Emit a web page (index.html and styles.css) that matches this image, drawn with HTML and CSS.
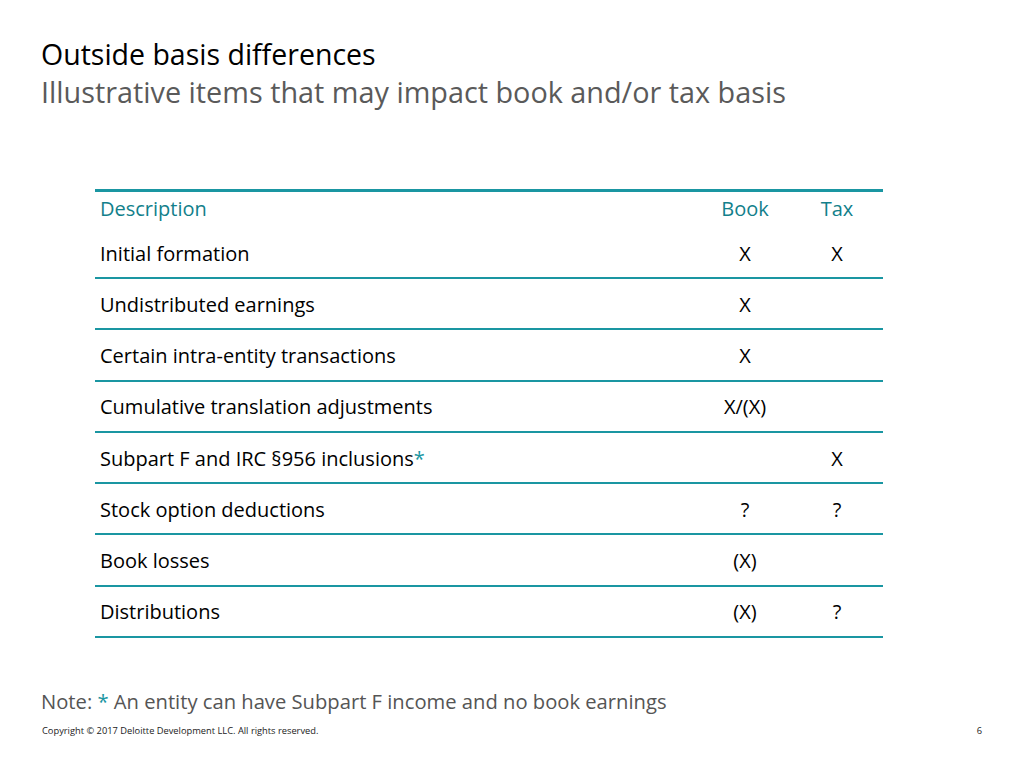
FILE: index.html
```html
<!DOCTYPE html>
<html>
<head>
<meta charset="utf-8">
<link rel="stylesheet" href="styles.css">
</head>
<body>
<div class="slide">
  <header class="head">
    <h1 class="title">Outside basis differences</h1>
    <h2 class="subtitle">Illustrative items that may impact book and/or tax basis</h2>
  </header>
  <table class="grid">
    <thead>
      <tr><th class="desc">Description</th><th class="col">Book</th><th class="col">Tax</th></tr>
    </thead>
    <tbody>
      <tr><td class="desc">Initial formation</td><td class="col">X</td><td class="col">X</td></tr>
      <tr><td class="desc">Undistributed earnings</td><td class="col">X</td><td class="col"></td></tr>
      <tr><td class="desc">Certain intra-entity transactions</td><td class="col">X</td><td class="col"></td></tr>
      <tr><td class="desc">Cumulative translation adjustments</td><td class="col">X/(X)</td><td class="col"></td></tr>
      <tr><td class="desc">Subpart F and IRC §956 inclusions<span class="star">*</span></td><td class="col"></td><td class="col">X</td></tr>
      <tr><td class="desc">Stock option deductions</td><td class="col">?</td><td class="col">?</td></tr>
      <tr><td class="desc">Book losses</td><td class="col">(X)</td><td class="col"></td></tr>
      <tr><td class="desc">Distributions</td><td class="col">(X)</td><td class="col">?</td></tr>
    </tbody>
  </table>
  <p class="note">Note: <span class="star">*</span> An entity can have Subpart F income and no book earnings</p>
  <footer class="foot">
    <span class="copy">Copyright © 2017 Deloitte Development LLC. All rights reserved.</span>
    <span class="page">6</span>
  </footer>
</div>
</body>
</html>
```

FILE: styles.css
```css
html, body {
  margin: 0;
  padding: 0;
  background: #fff;
}
.slide {
  width: 1024px;
  height: 768px;
  position: relative;
  font-family: "Open Sans", "Noto Sans", sans-serif;
  color: #000;
  box-sizing: border-box;
  padding: 36px 0 0 41px;
}
.title {
  margin: 0;
  font-weight: 400;
  font-size: 28.5px;
  line-height: 36px;
  color: #000;
}
.subtitle {
  margin: 0;
  font-weight: 400;
  font-size: 28.8px;
  line-height: 40px;
  color: #5a5a5a;
}
.grid {
  margin: 77px 0 0 54px;
  width: 788px;
  border-collapse: collapse;
  border-top: 3px solid #1a96a2;
}
.grid th {
  font-weight: 400;
  color: #12808b;
  font-size: 20px;
  height: 32px;
  padding: 0 0 4px 0;
  vertical-align: middle;
}
.grid td {
  font-size: 20px;
  height: 48.3px;
  padding: 0;
  border-bottom: 2px solid #1a96a2;
  vertical-align: middle;
  padding-top: 1px;
}
.grid tbody tr:first-child td {
  height: 48px;
}
.grid .desc {
  text-align: left;
  padding-left: 5px;
}
.grid .col {
  width: 92px;
  text-align: center;
}
.star {
  color: #1a96a2;
}
.note {
  margin: 49px 0 0 0;
  font-size: 20.2px;
  line-height: 28px;
  color: #555;
}
.foot {
  position: absolute;
  left: 42px;
  right: 42px;
  top: 724px;
  display: flex;
  justify-content: space-between;
  font-size: 9.3px;
  line-height: 14px;
  color: #222;
}
.page {
  padding-right: 0;
}
```
